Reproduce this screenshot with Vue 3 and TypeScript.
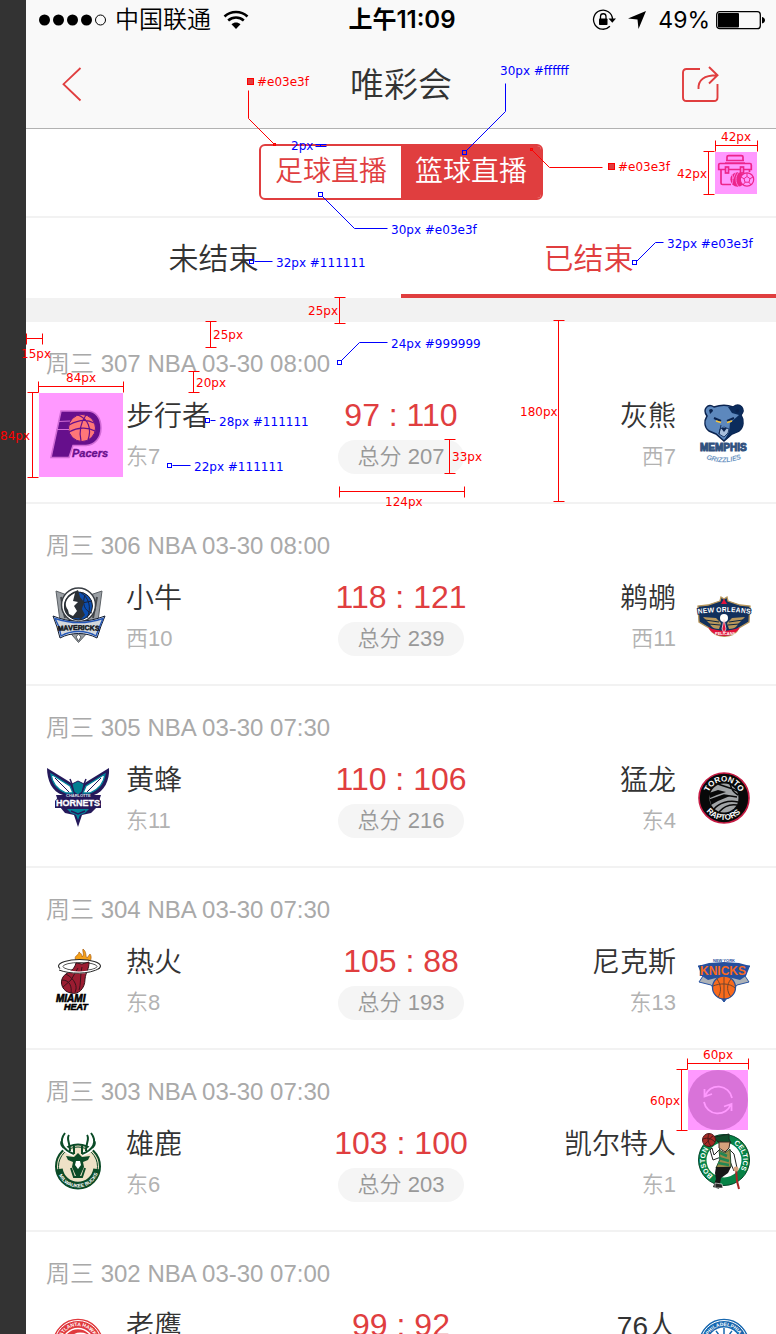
<script setup lang="ts">
interface Team {
  name: string
  rank?: string
  logo: string
}

interface Match {
  id: number
  time: string
  teams: [home: Team, away: Team]
  score: string
  total?: number
}

const matches: Match[] = [
  { id: 307, time: '03-30 08:00', teams: [{ name: '步行者', rank: '东7', logo: 'pacers' }, { name: '灰熊', rank: '西7', logo: 'grizzlies' }], score: '97 : 110', total: 207 },
  { id: 306, time: '03-30 08:00', teams: [{ name: '小牛', rank: '西10', logo: 'mavericks' }, { name: '鹈鹕', rank: '西11', logo: 'pelicans' }], score: '118 : 121', total: 239 },
  { id: 305, time: '03-30 07:30', teams: [{ name: '黄蜂', rank: '东11', logo: 'hornets' }, { name: '猛龙', rank: '东4', logo: 'raptors' }], score: '110 : 106', total: 216 },
  { id: 304, time: '03-30 07:30', teams: [{ name: '热火', rank: '东8', logo: 'heat' }, { name: '尼克斯', rank: '东13', logo: 'knicks' }], score: '105 : 88', total: 193 },
  { id: 303, time: '03-30 07:30', teams: [{ name: '雄鹿', rank: '东6', logo: 'bucks' }, { name: '凯尔特人', rank: '东1', logo: 'celtics' }], score: '103 : 100', total: 203 },
  { id: 302, time: '03-30 07:00', teams: [{ name: '老鹰', logo: 'hawks' }, { name: '76人', logo: 'sixers' }], score: '99 : 92' },
]

interface Label {
  text: string
  x: number
  y: number
}

// Dimension brackets: a measuring line with a tick at each end.
const across = (x1: number, x2: number, y: number) =>
  `M${x1} ${y}H${x2}M${x1} ${y - 5}V${y + 6}M${x2} ${y - 5}V${y + 6}`
const down = (x: number, y1: number, y2: number) =>
  `M${x} ${y1}V${y2}M${x - 5} ${y1}H${x + 6}M${x - 5} ${y2}H${x + 6}`

const redPaths: string[] = [
  across(715, 757, 145),
  down(708, 151, 194),
  down(339, 297, 323),
  down(210, 321, 347),
  across(26, 42, 338),
  across(38, 123, 386),
  down(32, 392, 477),
  down(193, 371, 392),
  down(558, 320, 501),
  down(449, 439, 473),
  across(339, 464, 491),
  across(687, 748, 1063),
  down(681, 1069, 1130),
  'M248 90V118L274 144',
  'M602 167H549L531 149',
]

const redLabels: Label[] = [
  { text: '42px', x: 721, y: 141 },
  { text: '42px', x: 677, y: 178 },
  { text: '25px', x: 308, y: 315 },
  { text: '25px', x: 213, y: 339 },
  { text: '15px', x: 21, y: 358 },
  { text: '84px', x: 66, y: 382 },
  { text: '84px', x: 0, y: 440 },
  { text: '20px', x: 196, y: 387 },
  { text: '180px', x: 520, y: 416 },
  { text: '33px', x: 452, y: 461 },
  { text: '124px', x: 385, y: 506 },
  { text: '60px', x: 703, y: 1059 },
  { text: '60px', x: 650, y: 1105 },
  { text: '#e03e3f', x: 257, y: 86 },
  { text: '#e03e3f', x: 618, y: 171 },
]

const bluePaths: string[] = [
  'M315 144H326M315 146H326M320 144V146',
  'M505 83V111L466 150',
  'M322 196L354 228H387',
  'M254 261H272',
  'M636 261L655 242H663',
  'M341 360L359 342H387',
  'M210 420H215',
  'M172 465H190',
]

const blueLabels: Label[] = [
  { text: '2px', x: 291, y: 150 },
  { text: '30px #ffffff', x: 500, y: 75 },
  { text: '30px #e03e3f', x: 391, y: 234 },
  { text: '32px #111111', x: 276, y: 267 },
  { text: '32px #e03e3f', x: 667, y: 248 },
  { text: '24px #999999', x: 391, y: 348 },
  { text: '28px #111111', x: 219, y: 426 },
  { text: '22px #111111', x: 194, y: 471 },
]

const anchors = [
  { x: 462, y: 150 },
  { x: 318, y: 192 },
  { x: 249, y: 259 },
  { x: 632, y: 260 },
  { x: 337, y: 360 },
  { x: 205, y: 418 },
  { x: 167, y: 463 },
]

const highlights = [
  { x: 715, y: 152, size: 42 },
  { x: 39, y: 393, size: 84 },
  { x: 688, y: 1070, size: 60 },
]
</script>

<template>
  <div class="board" lang="zh-CN">
    <main class="phone">
      <div class="status">
        <div class="status-left">
          <svg width="70" height="14" viewBox="0 0 70 14" aria-hidden="true">
            <circle cx="6.500" cy="7" r="5.500" /><circle cx="20.500" cy="7" r="5.500" /><circle cx="34.500" cy="7" r="5.500" /><circle cx="48.500" cy="7" r="5.500" />
            <circle cx="62.500" cy="7" r="5" fill="none" stroke="#000" />
          </svg>
          <span class="carrier">中国联通</span>
          <svg width="26" height="20" viewBox="0 0 26 20" aria-hidden="true">
            <path d="M1.500 6.500C8 .5 18 .5 24.500 6.500M5.200 10.500C9.800 6.500 16.200 6.500 20.800 10.500" fill="none" stroke="#000" stroke-width="2.600" />
            <path d="M8.500 14.200C11.200 12 14.800 12 17.500 14.200L13 19Z" />
          </svg>
        </div>
        <span class="clock">上午11:09</span>
        <div class="status-right">
          <svg width="24" height="22" viewBox="0 0 24 22" aria-hidden="true">
            <path d="M17.900 17.300A9.500 9.500 0 1 1 20.500 10" fill="none" stroke="#000" stroke-width="1.300" />
            <path d="M16.500 9.500H24L20.300 13.800Z" />
            <rect x="7" y="9.500" width="8.500" height="6.500" rx=".8" />
            <path d="M8.500 10V7.500A2.700 2.700 0 0 1 14 7.500V10" fill="none" stroke="#000" stroke-width="1.300" />
          </svg>
          <svg width="20" height="20" viewBox="0 0 20 20" aria-hidden="true"><path d="M19 1L11.500 19L10.500 9.500L1 8.500Z" /></svg>
          <span class="percent">49%</span>
          <svg width="50" height="20" viewBox="0 0 50 20" aria-hidden="true">
            <rect x=".7" y="1.700" width="43.600" height="17" rx="3" fill="none" stroke="#000" stroke-width="1.300" />
            <rect x="2" y="3" width="21" height="14.500" rx="1" />
            <path d="M46 7C50 7.500 50 13 46 13.500Z" />
          </svg>
        </div>
      </div>

      <header class="navbar">
        <button type="button" class="icon-button" aria-label="返回">
          <svg width="24" height="40" viewBox="0 0 24 40" aria-hidden="true"><path d="M20.500 4L3.500 20.200L20.500 36.500" fill="none" stroke="#e03e3f" stroke-width="1.800" /></svg>
        </button>
        <h1>唯彩会</h1>
        <button type="button" class="icon-button share" aria-label="分享">
          <svg width="40" height="40" viewBox="0 0 40 40" aria-hidden="true">
            <path d="M20 5H6.500Q3 5 3 8.500V33.500Q3 37 6.500 37H34Q37.500 37 37.500 33.500V20M18.500 25C18 16 24 11.300 37 11.300M29 3L37.500 11.300L29 19.500" fill="none" stroke="#e03e3f" stroke-width="1.900" />
          </svg>
        </button>
      </header>

      <div class="switcher">
        <div class="segments">
          <button type="button">足球直播</button>
          <button type="button" class="active">篮球直播</button>
        </div>
        <button type="button" class="icon-button toolbox" aria-label="工具箱">
          <svg width="42" height="42" viewBox="0 0 42 42" fill="none" stroke="#e03e3f" stroke-width="1.700" aria-hidden="true">
            <path d="M12 10V6Q12 4.700 13.500 4.700H26.500Q28 4.700 28 6V10M11 9.500H29M10 12H30M5 12.500H35Q36.300 12.500 36.300 14V18.500H28.500M25.500 18.500H13.500M10.500 18.500H3.700V14Q3.700 12.500 5 12.500M6 18.500V32Q6 33.500 7.500 33.500H16M34.500 18.500V21" />
            <rect x="10.500" y="16" width="3" height="6" /><rect x="25.500" y="16" width="3" height="6" />
            <circle cx="22.700" cy="28.500" r="7.300" fill="#e03e3f" stroke="none" />
            <path d="M24 21C20 25 20 32 24 36M17 23C18 27 18 30 17 33M21 21L18 28" stroke="#fff" stroke-width=".7" />
            <circle cx="32" cy="28.500" r="6.700" fill="#fff" stroke-width="1.200" />
            <path d="M32 25.500L35 27.700L34 31.200H30L29 27.700ZM32 22V25.500M38 26L35 27.700M36 34L34 31.200M28 34L30 31.200M26 26L29 27.700" stroke-width="1" />
          </svg>
        </button>
      </div>

      <nav class="tabs">
        <button type="button">未结束</button>
        <button type="button" class="active">已结束</button>
      </nav>

      <ul class="matches">
        <li v-for="match in matches" :key="match.id" class="match">
          <p class="when">周三 {{ match.id }} NBA {{ match.time }}</p>
          <div class="teams">
            <div v-for="(team, index) in match.teams" :key="team.logo" class="side" :class="{ away: index === 1 }">
              <svg class="logo" viewBox="0 0 84 84" aria-hidden="true">
                <g v-if="team.logo === 'pacers'">
                  <path d="M25 20H51C60 20 65 27 65 37C65 47 59 54 50 54.500H37L33 66.500H15Z" fill="#001a40" stroke="#b5b5bd" stroke-width="1.500" />
                  <circle cx="46" cy="37" r="13.500" fill="#ffc61e" stroke="#001a40" />
                  <path d="M33 34C42 29 51 28 58 32M33 41C42 36 52 36 59 40M42 24C52 28 56 37 52 49M50 24C45 31 43 41 45 50" fill="none" stroke="#001a40" stroke-width="1.200" />
                  <path d="M22 30.500L34 30M20 38.500H33" stroke="#b5b5bd" />
                  <text x="36" y="66" font-size="11" font-weight="700" font-style="italic" fill="#001a40" stroke="#001a40" stroke-width=".4">Pacers</text>
                </g>

                <g v-else-if="team.logo === 'grizzlies'">
                  <path d="M25 25C20 18 26 12 32 16C38 14 46 14 51 16C58 11 64 18 59 24C62 29 62 36 57 40L50 43L42 50L34 43L27 40C22 36 22 30 25 25Z" fill="#5d88bd" stroke="#0b2450" stroke-width="1.500" />
                  <path d="M46 16L51 16C58 11 64 18 59 24C62 29 62 36 57 40L50 43L42 50L47 41L48 32L57 24L50 22Z" fill="#0b2c5c" />
                  <path d="M27 19C29 17 31 18 31 20L28 23ZM53 20C55 17 58 18 57 21L55 22Z" fill="#0b2450" />
                  <path d="M32 27L39 30M52 27L45 30" stroke="#0b2450" stroke-width="2" />
                  <path d="M34 30L39 31.500M50 30L45 31.500" stroke="#f5c33b" stroke-width="1.800" />
                  <path d="M39 34L37 43M38 38L42 36L47 38L46 42L42 46L37 43Z" fill="#a9c0dd" stroke="#0b2450" stroke-width=".8" />
                  <path d="M39 37H45L42 41Z" fill="#0b2450" />
                  <text x="18" y="60" font-size="10" font-weight="700" fill="#31527f" stroke="#31527f" stroke-width="1">MEMPHIS</text>
                  <path id="arc-grizzlies" d="M22 67Q42 76 63 66" fill="none" />
                  <text font-size="7" font-weight="700" font-style="italic" fill="#7198c5"><textPath href="#arc-grizzlies" startOffset="2">GRIZZLIES</textPath></text>
                </g>

                <g v-else-if="team.logo === 'mavericks'">
                  <path d="M20 18L31 22H54L66 18L62 48L42.500 69.500L24 48Z" fill="#9a9fa4" stroke="#5c6166" />
                  <path d="M25 24L29 45M61 24L57 45" stroke="#45494d" stroke-width="2" />
                  <circle cx="42.500" cy="32" r="17" fill="#fff" stroke="#3a3f45" stroke-width="1.500" />
                  <circle cx="42.500" cy="33" r="14" fill="#0b4db0" stroke="#1f2328" />
                  <path d="M44 19C53 24 56 35 51 45M49 22C46 30 48 38 56 40M46 30L56 28" fill="none" stroke="#17233c" />
                  <path d="M40 18C27 22 25 36 32 43C38 47 42 44 45 46L49 42L46 36L48 29L44 24L42 17Z" fill="#2b3036" />
                  <path d="M39 20C29 25 28 32 32 37L33 41L37 43L41 38L38 33L42 29L37 28Z" fill="#fff" />
                  <path d="M17 43C34 50 51 50 69 43L65 53L61 65C50 59 35 59 24 65L21 54Z" fill="#e8ebee" stroke="#111c31" />
                  <path d="M19 45.500C35 51 51 51 67 45.500L63 55L60 63C50 57 35 57 25 63L23 54Z" fill="#d5d9dd" stroke="#2356b5" stroke-width="1.400" />
                  <path id="arc-mavericks" d="M22 58Q42 56 66 58" fill="none" />
                  <text font-size="7" font-weight="700" fill="#15191e" stroke="#15191e" stroke-width=".5"><textPath href="#arc-mavericks">MAVERICKS</textPath></text>
                  <path d="M42.500 61L45 64L42.500 68L40 64Z" fill="#fff" stroke="#5c6166" />
                </g>

                <g v-else-if="team.logo === 'pelicans'">
                  <path d="M38 28L39 24L42 26L45 24L46 28L58 32L68 33L67 49L57 55C52 66 33 66 27 55L17 49L16 33L26 32Z" fill="#12305c" stroke="#b9975b" stroke-width="1.300" />
                  <path d="M26 54C32 66 52 66 58 54C48 59 36 59 26 54Z" fill="#e2123b" />
                  <path d="M21 44L34 45L39 50L37 56C31 56 29 53 27 50ZM63 44L50 45L45 50L47 56C53 56 55 53 57 50Z" fill="#b9975b" />
                  <path d="M23 47L37 49M27 51L38 52M61 47L47 49M57 51L46 52" stroke="#0c2340" />
                  <circle cx="42" cy="45" r="4" fill="#fff" />
                  <path d="M42 46L44 56L42 60L40 56Z" fill="#e2123b" stroke="#fff" stroke-width=".7" />
                  <path d="M39 31L42 26L45 31Z" fill="#e2123b" />
                  <path id="arc-pelicans" d="M15 41Q42 37 70 41" fill="none" />
                  <text class="outlined" font-size="7" font-weight="700" fill="#fff" stroke="#12305c" stroke-width="2"><textPath href="#arc-pelicans" startOffset="1">NEW ORLEANS</textPath></text>
                  <text x="33" y="62" font-size="4" font-weight="700" fill="#fff">PELICANS</text>
                </g>

                <g v-else-if="team.logo === 'hornets'">
                  <path d="M11 13L37 29L40 35L44 35L47 29L73 13C74 25 68 37 58 40H65L61 52L55 58L46 60L42 72L38 60L29 58L24 52L20 40H27C16 37 11 25 11 13Z" fill="#25195a" />
                  <path d="M15 19L34 31L37 38H30C20 34 16 27 15 19ZM69 19L50 31L47 38H54C64 34 68 27 69 19Z" fill="#fff" stroke="#00839a" stroke-width="1.300" />
                  <path d="M19 23L33 37M65 23L51 37" stroke="#25195a" />
                  <path d="M36 29L34 24M48 29L50 24" stroke="#25195a" stroke-width="1.500" />
                  <path d="M36 29L42 26L48 29L46 37L42 40L38 37Z" fill="#007f91" stroke="#25195a" />
                  <path d="M31 54H53L49 58L44 60L42 65L40 60L35 58Z" fill="#00859a" />
                  <path d="M35 56L42 59L49 56" fill="none" stroke="#25195a" stroke-width="1.500" />
                  <path d="M23 41H61L65 46V53H19V46Z" fill="#25195a" />
                  <text x="30" y="42" font-size="4" font-weight="700" fill="#d9e3eb">CHARLOTTE</text>
                  <text x="20" y="51" font-size="9" font-weight="700" fill="#fff" stroke="#fff" stroke-width=".3">HORNETS</text>
                </g>

                <g v-else-if="team.logo === 'raptors'">
                  <circle cx="42" cy="43" r="25" fill="#080909" stroke="#c51b43" stroke-width="1.600" />
                  <circle cx="42" cy="43" r="14.500" fill="#a1a5a7" />
                  <path d="M27 38L36 35L44 37L35 40L28 43ZM28 45L42 40L48 41L36 46L29 50Z" fill="#080909" />
                  <path d="M28 45L42 40L55 42M32 54C37 48 46 45 56 47M37 57C43 50 49 49 55 50M36 29C43 32 48 32 55 36M48 29C50 35 51 37 56 40" fill="none" stroke="#080909" stroke-width="1.500" />
                  <path id="arc-raptors-top" d="M25.500 43A16.500 16.500 0 0 1 58.500 43" fill="none" />
                  <path id="arc-raptors-bottom" d="M20 43A22 22 0 0 0 64 43" fill="none" />
                  <text font-size="8" font-weight="700" fill="#fff"><textPath href="#arc-raptors-top" startOffset="6">TORONTO</textPath></text>
                  <text font-size="8" font-weight="700" fill="#fff"><textPath href="#arc-raptors-bottom" startOffset="14">RAPTORS</textPath></text>
                </g>

                <g v-else-if="team.logo === 'heat'">
                  <path d="M40 24C37 18 43 19 43 15C46 17 46 19 46 20C49 18 46 14 47 12C51 15 49 19 51 21L54 17C57 21 53 25 53 29L42 28Z" fill="#f5a018" stroke="#a65b12" stroke-width=".7" />
                  <ellipse cx="43.500" cy="29" rx="21" ry="6.500" fill="#fff" stroke="#2a2a2a" stroke-width="1.100" />
                  <ellipse cx="44" cy="29.500" rx="17" ry="4" fill="#fff" stroke="#2a2a2a" stroke-width=".8" />
                  <path d="M40 26L46 27L53 25C53 33 50 34 49 42C49 52 42 58 35 56C27 55 23 46 27 40C30 35 38 35 40 26Z" fill="#9b1c31" stroke="#321017" />
                  <path d="M26 43C34 43 36 50 35 56M30 37C39 42 42 50 39 55M27 50L35 43L42 31M46 30C44 39 45 48 43 53" fill="none" stroke="#3b121b" />
                  <path d="M24 32C33 36 51 37 62 32" fill="none" stroke="#fff" stroke-width="2" />
                  <path d="M23 33C33 37 53 38 64 31" fill="none" stroke="#2a2a2a" />
                  <text x="20" y="65" font-size="10" font-weight="700" font-style="italic" stroke="#000" stroke-width=".6">MIAMI</text>
                  <text x="28" y="73" font-size="9" font-weight="700" font-style="italic" stroke="#000" stroke-width=".6">HEAT</text>
                </g>

                <g v-else-if="team.logo === 'knicks'">
                  <path d="M16 29L68 29L61 36L67 45L55 48L42 65L29 48L17 45L23 36Z" fill="#aeb2b7" stroke="#2853a1" />
                  <path d="M16 29L27 26L42 25L57 26L68 29L64 39L58 43L46 40H38L26 43L20 39Z" fill="#25509e" />
                  <circle cx="42" cy="50.500" r="11.500" fill="#f96a1c" stroke="#25509e" stroke-width="1.300" />
                  <path d="M31 49C38 46 48 46 53 51M42 40V62M35 42C40 49 39 56 36 60M49 42C44 48 45 55 49 60" fill="none" stroke="#70452e" />
                  <text class="outlined" x="18" y="38" font-size="12" font-weight="700" fill="#f96a1c" stroke="#25509e" stroke-width="2">KNICKS</text>
                  <text x="31" y="25" font-size="4" font-weight="700" fill="#25509e">NEW YORK</text>
                  <path d="M40 62H44L42 65Z" fill="#25509e" />
                </g>

                <g v-else-if="team.logo === 'bucks'">
                  <circle cx="42" cy="47.500" r="22" fill="#eee1c6" stroke="#0b4b27" stroke-width="2" />
                  <circle cx="42" cy="47.500" r="19.500" fill="none" stroke="#0b4b27" />
                  <path d="M29 14C22 23 27 31 38 35M55 14C62 23 57 31 46 35" fill="none" stroke="#fff" stroke-width="5" />
                  <path d="M29 14C22 23 27 31 38 35M26 22C24 24 26 29 30 30M33 16C30 20 34 23 34 32M55 14C62 23 57 31 46 35M58 22C60 24 58 29 54 30M51 16C54 20 50 23 50 32M38 27V35M46 27V35" fill="none" stroke="#0b4b27" stroke-width="2" />
                  <path d="M30 37L38 38L42 34L46 38L54 37L52 41L47 43L48 48L44 57H40L36 48L37 43L32 41Z" fill="#0b4b27" />
                  <path d="M35 49L38 58H46L49 49" fill="none" stroke="#0b4b27" stroke-width="2" />
                  <path d="M40 42H44L45 46L42 50L39 46Z" fill="#fff" />
                  <path d="M23.200 50A19 19 0 0 0 60.800 50" fill="none" stroke="#0b4b27" stroke-width="7" />
                  <path id="arc-bucks" d="M21 47.500A21 21 0 0 0 63 47.500" fill="none" />
                  <text font-size="5" font-weight="700" fill="#fff"><textPath href="#arc-bucks" startOffset="9">MILWAUKEE BUCKS</textPath></text>
                </g>

                <g v-else-if="team.logo === 'celtics'">
                  <circle cx="42" cy="41" r="21.500" fill="#fff" stroke="#078346" stroke-width="8" />
                  <circle cx="42" cy="41" r="25.500" fill="none" stroke="#06482a" />
                  <path id="arc-celtics-left" d="M31.100 56.600A19 19 0 0 1 27.400 28.800" fill="none" />
                  <path id="arc-celtics-right" d="M50 23.800A19 19 0 0 1 54.200 55.600" fill="none" />
                  <text font-size="7" font-weight="700" fill="#fff"><textPath href="#arc-celtics-left">BOSTON</textPath></text>
                  <text font-size="7" font-weight="700" fill="#fff"><textPath href="#arc-celtics-right" startOffset="2">CELTICS</textPath></text>
                  <path d="M38 17L47 15V20L49 24L36 23L32 18Z" fill="#104d2b" stroke="#182b21" />
                  <path d="M37 23L48 23L47 29L43 33L37 29Z" fill="#d6a17c" stroke="#3b2b22" />
                  <path d="M38 30L32 36L30 29L28 31L31 41L39 38M47 30L52 35L55 49L52 52L47 40" fill="#fff" stroke="#222" />
                  <path d="M37 31L43 34L48 30L49 48L34 49L38 40Z" fill="#9b8b49" stroke="#294f31" />
                  <path d="M38 34L45 37M37 39L47 42M36 44L47 46" stroke="#228653" stroke-width="2.500" />
                  <path d="M34 48L49 48L46 54L39 59L37 70L31 68L34 60L33 54Z" fill="#171717" />
                  <path d="M33 64L40 65L41 69L33 69Z" fill="#262626" stroke="#fff" stroke-width=".6" />
                  <path d="M54 50L55 62L57 70" fill="none" stroke="#ab2525" stroke-width="2" />
                  <circle cx="54" cy="50" r="2.500" fill="#d6a17c" />
                  <circle cx="27" cy="21" r="6.500" fill="#a62b26" stroke="#4d1919" />
                  <path d="M21 20C26 18 30 20 33 23M27 15C25 19 26 24 29 27M23 25C27 22 28 18 31 17" fill="none" stroke="#4d1919" />
                </g>

                <g v-else-if="team.logo === 'hawks'">
                  <circle cx="42" cy="43" r="24.500" fill="#e03a3e" stroke="#e03a3e" stroke-width="1.500" />
                  <circle cx="42" cy="43" r="23.500" fill="none" stroke="#fff" />
                  <circle cx="42" cy="43" r="15.500" fill="#e03a3e" stroke="#fff" stroke-width="1.500" />
                  <path d="M31 42C34 32 44 29 53 34L44 35L38 42Z" fill="#fff" />
                  <path id="arc-hawks" d="M24 43A18 18 0 0 1 60 43" fill="none" />
                  <text font-size="5" font-weight="700" fill="#fff"><textPath href="#arc-hawks" startOffset="8">ATLANTA HAWKS</textPath></text>
                </g>

                <g v-else>
                  <circle cx="42" cy="43" r="24.500" fill="#1767af" stroke="#1767af" stroke-width="1.500" />
                  <circle cx="42" cy="43" r="23.500" fill="none" stroke="#fff" />
                  <circle cx="42" cy="43" r="16.500" fill="#fff" />
                  <path d="M28 42C32 31 52 31 56 42M42 27V42M34 30C38 34 38 38 37 42M50 30C46 34 46 38 47 42" fill="none" stroke="#1767af" stroke-width="1.500" />
                  <path id="arc-sixers" d="M24 43A18 18 0 0 1 60 43" fill="none" />
                  <text font-size="5" font-weight="700" fill="#fff"><textPath href="#arc-sixers" startOffset="9">PHILADELPHIA</textPath></text>
                </g>
              </svg>
              <div class="team">
                <span class="name">{{ team.name }}</span>
                <span v-if="team.rank" class="rank">{{ team.rank }}</span>
              </div>
            </div>
            <div class="result">
              <strong>{{ match.score }}</strong>
              <span v-if="match.total" class="total">总分 {{ match.total }}</span>
            </div>
          </div>
        </li>
      </ul>

      <button type="button" class="refresh" aria-label="刷新">
        <svg width="32" height="32" viewBox="0 0 32 32" fill="none" stroke="#fff" stroke-width="1.800" aria-hidden="true">
          <path d="M30 14A14 14 0 0 0 3 12M2.500 5V12.500L10 10M2 18A14 14 0 0 0 29 20M29.500 27V20L22 22.500" />
        </svg>
      </button>
    </main>

    <svg class="annotations" aria-hidden="true">
      <rect v-for="h in highlights" :key="`h${h.y}`" :x="h.x" :y="h.y" :width="h.size" :height="h.size" fill="#ff00ff" fill-opacity=".4" />
      <g transform="translate(.5 .5)" fill="none" stroke="#ff0000">
        <path v-for="d in redPaths" :key="d" :d="d" />
        <rect x="247" y="78" width="6" height="6" fill="#e03e3f" />
        <rect x="608" y="163" width="6" height="6" fill="#e03e3f" />
        <rect x="273" y="143" width="2" height="2" />
        <rect x="530" y="148" width="2" height="2" />
      </g>
      <g transform="translate(.5 .5)" fill="none" stroke="#0000ff">
        <path v-for="d in bluePaths" :key="d" :d="d" />
        <rect v-for="a in anchors" :key="`a${a.x}`" :x="a.x" :y="a.y" width="4" height="4" />
      </g>
      <text v-for="l in redLabels" :key="`r${l.x}-${l.y}`" :x="l.x" :y="l.y" fill="#ff0000">{{ l.text }}</text>
      <text v-for="l in blueLabels" :key="`b${l.x}-${l.y}`" :x="l.x" :y="l.y" fill="#0000ff">{{ l.text }}</text>
    </svg>
  </div>
</template>

<style>
body {
  margin: 0;
}
</style>

<style scoped>
.board {
  position: relative;
  box-sizing: border-box;
  height: 100vh;
  overflow: hidden;
  padding-left: 26px;
  background: #333;
  color: #333;
  font-family: "Liberation Sans", "Noto Sans CJK SC", sans-serif;
  font-weight: 350;
}

.phone {
  position: relative;
  height: 100%;
  overflow: hidden;
  background: #fff;
}

button {
  margin: 0;
  padding: 0;
  border: 0;
  background: none;
  color: inherit;
  font: inherit;
  cursor: pointer;
}

svg {
  display: block;
  flex: none;
}

.outlined {
  paint-order: stroke;
}

.status {
  display: grid;
  grid-template-columns: 1fr auto 1fr;
  align-items: center;
  height: 40px;
  padding: 0 10px 0 12px;
  background: #f9f9f9;
  color: #000;
  font-family: Inter, "Noto Sans CJK SC", sans-serif;
  font-size: 24px;
  line-height: 40px;
}

.status-left,
.status-right {
  display: flex;
  align-items: center;
}

.status-right {
  justify-content: flex-end;
}

.carrier {
  margin: 0 12px 0 7px;
}

.clock {
  font-weight: 600;
}

.status-right .percent {
  margin: 0 6px 0 11px;
  font-size: 23px;
  font-weight: 400;
}

.status-right svg + svg {
  margin-left: 11px;
}

.navbar {
  display: grid;
  grid-template-columns: 1fr auto 1fr;
  align-items: center;
  height: 88px;
  padding: 0 56px 0 34px;
  border-bottom: 1px solid #b2b2b2;
  background: #f9f9f9;
}

.navbar h1 {
  margin: 2px 0 0 22px;
  font-size: 34px;
  font-weight: 350;
  line-height: 48px;
}

.icon-button {
  justify-self: start;
}

.icon-button.share {
  justify-self: end;
}

.switcher {
  display: grid;
  grid-template-columns: 1fr auto 1fr;
  align-items: start;
  padding: 15px 19px 16px;
  border-bottom: 2px solid #f2f2f2;
}

.segments {
  display: grid;
  grid-template-columns: 1fr 1fr;
  grid-column: 2;
  width: 280px;
  overflow: hidden;
  border: 2px solid #e03e3f;
  border-radius: 6px;
  color: #e03e3f;
  font-size: 28px;
  line-height: 52px;
}

.segments .active {
  background: #e03e3f;
  color: #fff;
}

.icon-button.toolbox {
  align-self: center;
  justify-self: end;
}

.tabs {
  display: grid;
  grid-template-columns: 1fr 1fr;
  height: 80px;
  border-bottom: 24px solid #f2f2f2;
  font-size: 30px;
}

.tabs button {
  border-bottom: 4px solid transparent;
}

.tabs .active {
  border-bottom-color: #e03e3f;
  color: #e03e3f;
}

.matches {
  margin: 0;
  padding: 0;
  list-style: none;
}

.match {
  padding: 25px 10px 27px;
  border-bottom: 2px solid #f2f2f2;
}

.when {
  margin: 0 0 10px;
  padding-left: 10px;
  color: #a9a9a9;
  font-size: 24px;
  line-height: 34px;
}

.teams {
  display: grid;
  grid-template-columns: 1fr auto 1fr;
}

.side {
  display: flex;
  grid-row: 1;
  grid-column: 1;
  gap: 6px;
}

.side.away {
  flex-direction: row-reverse;
  grid-column: 3;
}

.logo {
  width: 84px;
  height: 84px;
}

.team,
.result {
  display: flex;
  flex-direction: column;
  padding-top: 4px;
}

.away .team {
  align-items: flex-end;
}

.name {
  padding-top: 2px;
  font-size: 28px;
  line-height: 40px;
}

.rank {
  margin-top: 3px;
  color: #b2b2b2;
  font-size: 22px;
  line-height: 34px;
}

.result {
  grid-row: 1;
  grid-column: 2;
  align-items: center;
}

.result strong {
  color: #e03e3f;
  font-size: 32px;
  font-weight: 400;
  line-height: 40px;
}

.total {
  margin-top: 5px;
  padding: 0 20px;
  border-radius: 17px;
  background: #f5f5f5;
  color: #999;
  font-size: 22px;
  line-height: 34px;
}

.refresh {
  position: absolute;
  right: 28px;
  bottom: 204px;
  display: grid;
  place-items: center;
  width: 60px;
  height: 60px;
  border-radius: 50%;
  background: #c0c0c0;
}

.annotations {
  position: absolute;
  top: 0;
  left: 0;
  width: 100%;
  height: 100%;
  pointer-events: none;
  font-family: "DejaVu Sans", sans-serif;
  font-size: 12px;
  font-weight: 400;
}
</style>
